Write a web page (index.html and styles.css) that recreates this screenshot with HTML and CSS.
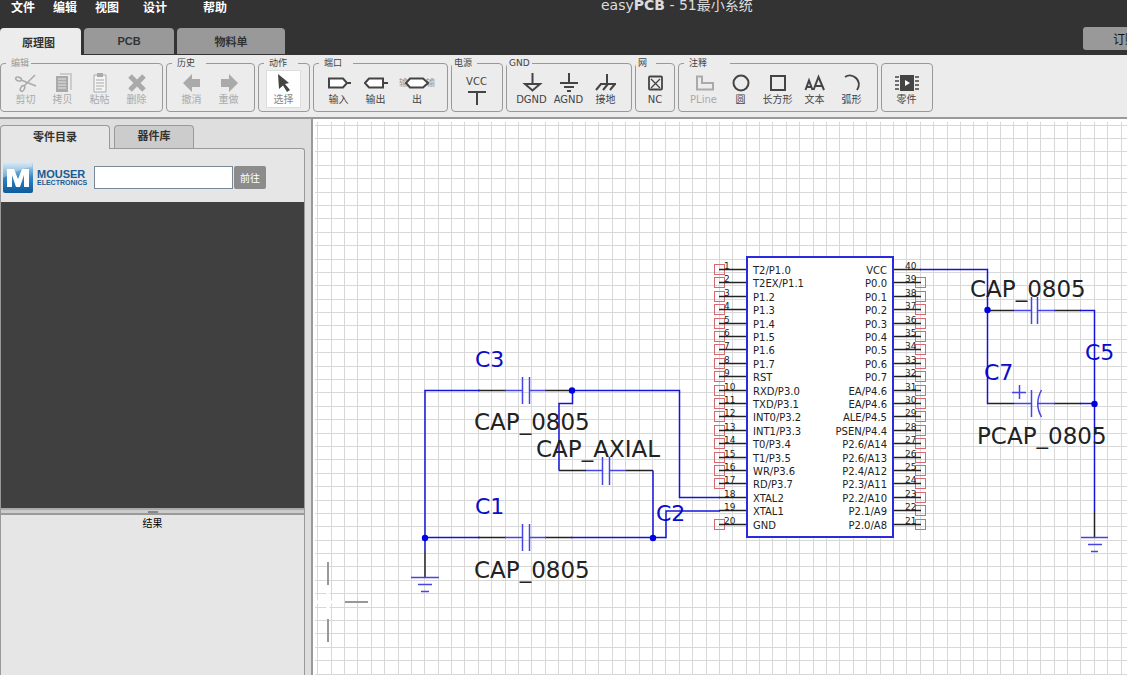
FILE: index.html
```html
<!DOCTYPE html>
<html lang="zh-CN">
<head>
<meta charset="utf-8">
<title>easyPCB - 51最小系统</title>
<link rel="stylesheet" href="styles.css">
</head>
<body>
<div class="app">
  <header class="header">
    <div class="menubar">
      <nav class="menu">
        <button>文件</button><button>编辑</button><button>视图</button><button class="menu-wide">设计</button><button class="menu-last">帮助</button>
      </nav>
      <h1 class="title">easy<b>PCB</b> - 51最小系统</h1>
    </div>
    <div class="tabbar">
      <button class="tab tab-active">原理图</button>
      <button class="tab tab-mid">PCB</button>
      <button class="tab tab-wide">物料单</button>
      <button class="order">订购</button>
    </div>
  </header>

  <div class="toolbar">
    <fieldset class="group">
      <legend class="lg-s dim">编辑</legend>
      <button class="tool" disabled><svg viewBox="0 0 24 22"><g fill="none" stroke="currentColor" stroke-width="1.5"><path d="M7 8L22 14M21 3L10 14"/><ellipse cx="4.500" cy="7" rx="3" ry="1.800" transform="rotate(20 4.500 7)"/><ellipse cx="8.500" cy="16.500" rx="1.900" ry="3" transform="rotate(30 8.500 16.500)"/></g></svg>剪切</button>
      <button class="tool" disabled><svg viewBox="0 0 24 22"><path d="M9 2H20V18" fill="none" stroke="#ccc" stroke-width="2"/><path d="M5 4H17V20H5Z" fill="currentColor"/><path d="M7 7H15M7 10H15M7 13H15M7 16H15" stroke="#e6e6e6"/></svg>拷贝</button>
      <button class="tool" disabled><svg viewBox="0 0 24 22"><path d="M6 3H18V20H6Z" fill="#f4f4f4" stroke="currentColor"/><path d="M9 1H15V5H9Z" fill="currentColor"/><path d="M8 8H16M8 11H16M8 14H16M8 17H14" stroke="currentColor"/></svg>粘帖</button>
      <button class="tool" disabled><svg viewBox="0 0 24 22"><path d="M5 4L19 18M19 4L5 18" stroke="currentColor" stroke-width="5"/></svg>删除</button>
    </fieldset>
    <fieldset class="group">
      <legend class="lg-m">历史</legend>
      <button class="tool" disabled><svg viewBox="0 0 24 22"><path d="M3 11L12 2V7H20V15H12V20Z" fill="currentColor"/></svg>撤消</button>
      <button class="tool" disabled><svg viewBox="0 0 24 22"><path d="M21 11L12 2V7H4V15H12V20Z" fill="currentColor"/></svg>重做</button>
    </fieldset>
    <fieldset class="group">
      <legend class="lg-m">动作</legend>
      <button class="tool selected"><svg viewBox="0 0 24 22"><path d="M6 2L17 11L13 12L18 18L15 20L11 13.500L7 17Z" fill="currentColor"/></svg><span>选择</span></button>
    </fieldset>
    <fieldset class="group">
      <legend class="lg-m">端口</legend>
      <button class="tool"><svg viewBox="0 0 24 22"><path d="M2 6.500H16L20 11L16 15.500H2ZM20 11H24" fill="#fff" stroke="currentColor" stroke-width="2"/></svg>输入</button>
      <button class="tool"><svg viewBox="0 0 24 22"><path d="M5 6.500H19V15.500H5L1 11ZM19 11H24" fill="#fff" stroke="currentColor" stroke-width="2"/></svg>输出</button>
      <button class="tool inout"><span class="inout-word">输</span><svg viewBox="0 0 26 22"><path d="M6 6.500H19L24 11L19 15.500H6L2 11Z" fill="#fff" stroke="currentColor" stroke-width="2"/></svg><span class="inout-word">输</span><span class="inout-label">出</span></button>
    </fieldset>
    <fieldset class="group">
      <legend class="lg-s flush">电源</legend>
      <button class="tool vcc">VCC<svg viewBox="0 0 24 22"><path d="M3 4H21M12 4V17" stroke="currentColor" stroke-width="2"/></svg></button>
    </fieldset>
    <fieldset class="group">
      <legend class="lg-s flush">GND</legend>
      <button class="tool"><svg viewBox="0 0 24 22"><path d="M12.500 1V12M5 12H20L12.500 18.500Z" fill="none" stroke="currentColor" stroke-width="2"/></svg>DGND</button>
      <button class="tool"><svg viewBox="0 0 24 22"><path d="M12 1V11M3 11H21M7 15H17M10 19H14" stroke="currentColor" stroke-width="2"/></svg>AGND</button>
      <button class="tool"><svg viewBox="0 0 24 22"><path d="M13 2V12M6 12H22M7 12L2 18M14 12L9 18M21 12L16 18" stroke="currentColor" stroke-width="2"/></svg>接地</button>
    </fieldset>
    <fieldset class="group tight">
      <legend class="lg-s flush">网</legend>
      <button class="tool"><svg viewBox="0 0 24 22"><rect x="6" y="4.500" width="13" height="13" rx="1" fill="none" stroke="currentColor" stroke-width="1.800"/><path d="M8 7L17 16M17 7L8 16" stroke="currentColor" stroke-width="1.300"/></svg>NC</button>
    </fieldset>
    <fieldset class="group">
      <legend class="lg-l">注释</legend>
      <button class="tool" disabled><svg viewBox="0 0 24 22"><path d="M5 4.500H10V11H21V17.500H5Z" fill="none" stroke="currentColor" stroke-width="2"/></svg>PLine</button>
      <button class="tool"><svg viewBox="0 0 24 22"><circle cx="12" cy="11" r="7.500" fill="none" stroke="currentColor" stroke-width="2"/></svg>圆</button>
      <button class="tool"><svg viewBox="0 0 24 22"><rect x="5" y="4" width="14" height="14" fill="none" stroke="currentColor" stroke-width="2"/></svg>长方形</button>
      <button class="tool"><svg viewBox="0 0 24 22"><path d="M2.500 18L6 8.500L9.500 18M4 15H8.500M10.500 18L15.500 5L21 18M12.500 14H19" fill="none" stroke="currentColor" stroke-width="2"/></svg>文本</button>
      <button class="tool"><svg viewBox="0 0 24 22"><path d="M5 5C13 0 23 9 17 18" fill="none" stroke="currentColor" stroke-width="2"/></svg>弧形</button>
    </fieldset>
    <fieldset class="group">
      <legend class="lg-none"></legend>
      <button class="tool"><svg class="wide-icon" viewBox="0 0 26 22"><path d="M1 5H25M1 9H25M1 13H25M1 17H25" stroke="currentColor" stroke-width="1.500"/><path d="M5.500 2.500H20.500V19.500H5.500Z" fill="currentColor" stroke="#ececec"/><path d="M11 8L16 11L11 14Z" fill="#fff"/></svg>零件</button>
    </fieldset>
  </div>

  <main class="workspace">
    <aside class="sidebar">
      <div class="side-tabs">
        <button class="side-tab side-tab-active">零件目录</button>
        <button class="side-tab">器件库</button>
      </div>
      <div class="side-body">
        <form class="search">
          <svg class="logo" viewBox="0 0 30 31" aria-hidden="true">
            <defs><linearGradient id="lg" x1="0" y1="0" x2="0" y2="1"><stop offset="0" stop-color="#cfe3f1"/><stop offset=".5" stop-color="#2f86c2"/><stop offset="1" stop-color="#0c5a9c"/></linearGradient></defs>
            <rect width="30" height="31" rx="2" fill="url(#lg)"/>
            <path d="M0 16C9 11 20 6 29 5V2Q29 0 27 0H2Q0 0 0 2Z" fill="#fff" opacity=".3"/>
            <path d="M4 25V7H11L15 17L19 7H26V25H21V13L17 25H13L9 13V25Z" fill="#fff"/>
          </svg>
          <div class="brand"><strong>MOUSER</strong><span>ELECTRONICS</span></div>
          <input class="query" type="text" aria-label="搜索零件">
          <button class="go" type="button">前往</button>
        </form>
        <div class="catalog"></div>
        <div class="splitter"><i></i></div>
        <section class="results"><h2>结果</h2></section>
      </div>
    </aside>

    <section class="canvas">
      <svg class="sheet" role="img" aria-label="51最小系统原理图">
        <g transform="translate(-313 -119)">
          <path id="grid" class="grid"/>
          <path class="clear" d="M316 602H342M328 587V617"/>
          <path class="cursor" d="M328 562V585M328 619V642M345 602H368"/>
          <rect class="chip" x="747" y="257" width="146" height="280"/>
          <g id="pins"></g>
          <g class="lead">
            <path d="M478 390.500H506M545 390.500H572M559 470.500H586M626 470.500H653M478 537.500H506M545 537.500H572M425 551V577M987 310.500H1014M1054 310.500H1081M987 403.500H1014M1054 403.500H1081M1094.500 511V538"/>
          </g>
          <g class="wire">
            <path d="M480 390.500H425V551M425 537.500H480M571 390.500H679.500V497.500H720M572.500 390V403.500H559V470.500M653 470.500V538M571 537.500H666V511H720M920 269.500H987.500V404M1080 310.500H1094.500V511M1080 403.500H1095"/>
          </g>
          <g class="symbol">
            <path d="M505 390.500H522.500M529.500 390.500H546M522.500 377V404M529.500 377V404"/>
            <path d="M586 470.500H602.500M609.500 470.500H626M602.500 457V485M609.500 457V485"/>
            <path d="M505 537.500H522.500M529.500 537.500H546M522.500 524V551M529.500 524V551"/>
            <path d="M1014 310.500H1031.500M1037.500 310.500H1055M1031.500 297V324M1037.500 297V324"/>
            <path d="M1014 403.500H1031.500M1037.500 403.500H1055M1031.500 390V417M1041.500 390Q1034 404 1041.500 417M1012 392.500H1026M1019.500 385V399"/>
            <path d="M411 577.500H439M418 584.500H432M421 591.500H429M1081 537.500H1108M1088 544.500H1102M1091 551.500H1098"/>
          </g>
          <g class="dot">
            <circle cx="572" cy="390.500" r="3.200"/><circle cx="425" cy="538" r="3.200"/><circle cx="653" cy="538" r="3.200"/><circle cx="987.500" cy="310" r="3.200"/><circle cx="1094.500" cy="404" r="3.200"/>
          </g>
          <g class="part">
            <text x="474" y="430">CAP_0805</text><text x="536" y="457">CAP_AXIAL</text><text x="474" y="578">CAP_0805</text><text x="970" y="297">CAP_0805</text><text x="977" y="444">PCAP_0805</text>
          </g>
          <g class="ref">
            <text x="475" y="367">C3</text><text x="475" y="514">C1</text><text x="656" y="521">C2</text><text x="1085" y="360">C5</text><text x="984" y="380">C7</text>
          </g>
        </g>
      </svg>
    </section>
  </main>
</div>
<script src="script.js"></script>
</body>
</html>
```
FILE: styles.css
```css
* { box-sizing: border-box; }
body { margin: 0; font-family: "DejaVu Sans", "Noto Sans CJK SC", sans-serif; overflow: hidden; }
button { font-family: inherit; border: 0; padding: 0; background: none; white-space: nowrap; }
.app { display: flex; flex-direction: column; height: 100vh; }

.header { background: #333; overflow: hidden; flex: none; }
.menubar { display: flex; height: 28px; }
.menu { display: flex; width: 601px; padding-left: 11px; flex: none; }
.menu button { color: #fff; font-size: 12px; font-weight: bold; line-height: 17px; height: 17px; margin-right: 18px; }
.menu .menu-wide { margin-left: 6px; }
.menu .menu-last { margin-left: 18px; }
.title { margin: -5px 0 0; color: #ddd; font-size: 14px; font-weight: normal; line-height: 20px; white-space: nowrap; }
.tabbar { display: flex; gap: 3px; height: 27px; }
.tab { width: 90px; background: #999; color: #333; border-radius: 4px 4px 0 0; font-family: "Liberation Sans", "Noto Sans CJK SC", sans-serif; font-size: 11px; font-weight: bold; height: 26px; }
.tab-active { width: 81px; background: #ececec; height: 27px; padding-right: 4px; }
.tab-wide { width: 108px; }
.order { flex: none; width: 84px; height: 23px; margin: -1px -40px 0 auto; background: #999; border-radius: 3px; font-size: 12px; color: #111; }

.toolbar { display: flex; gap: 3px; height: 64px; flex: none; padding-top: 2px; background: #ececec; border-bottom: 2px solid #999; overflow: hidden; }
.group { display: flex; flex: none; margin: 0; padding: 0 7px 0 6px; border: 1px solid #999; border-radius: 4px; height: 55px; min-width: 0; }
.tight { padding: 0; }
.group legend { height: 13px; margin-left: -1px; padding: 0 0 0 5px; font-size: 9px; line-height: 13px; color: #444; white-space: nowrap; }
.group .dim { color: #999; }
.group .lg-s { width: 25px; }
.group .lg-m { width: 34px; }
.group .lg-l { width: 46px; }
.group .lg-none { width: 0; padding: 0; }
.group .flush { margin-left: -6px; padding-left: 2px; }
.tight .flush { margin-left: 0; width: 20px; }
.tool { display: flex; flex-direction: column; align-items: center; width: 37px; height: 40px; color: #444; font-size: 10px; line-height: 12px; padding-top: 2px; }
.tool:disabled { color: #aaa; }
.tool svg { width: 24px; height: 22px; flex: none; display: block; }
.tool .wide-icon { width: 26px; }
.selected { width: 35px; margin: 0 1px; height: 38px; background: #fff; border: 1px solid #ddd; padding-top: 1px; }
.selected span { color: #888; }
.inout { width: 46px; flex-flow: row wrap; justify-content: center; align-content: flex-start; }
.inout-word { color: #999; font-size: 9px; line-height: 22px; }
.tool.inout svg { position: relative; width: 26px; margin: 0 -4px; }
.inout-label { width: 100%; text-align: center; }
.vcc { padding-top: 6px; }
.tight .tool { width: 38px; }

.workspace { display: flex; flex: 1; min-height: 0; }
.sidebar { display: flex; flex-direction: column; flex: none; width: 313px; padding: 6px 6px 0 0; background: #dedede; border-right: 2px solid #999; }
.side-tabs { display: flex; gap: 4px; height: 23px; }
.side-tab { width: 80px; height: 23px; background: #ccc; color: #333; border: 1px solid #999; border-bottom: 0; border-radius: 4px 4px 0 0; font-size: 11px; font-weight: bold; line-height: 20px; }
.side-tab-active { width: 110px; height: 24px; background: #e6e6e6; z-index: 1; }
.side-body { display: flex; flex-direction: column; flex: 1; min-height: 0; background: #e6e6e6; border: 1px solid #999; border-bottom: 0; border-radius: 0 3px 0 0; }
.search { display: flex; align-items: center; height: 53px; flex: none; margin: 0; padding: 4px 0 0 2px; }
.logo { width: 30px; height: 31px; margin-right: 4px; flex: none; }
.brand { width: 57px; display: flex; flex-direction: column; color: #175c94; font-family: "Liberation Sans", sans-serif; }
.brand strong { font-size: 11px; line-height: 10px; }
.brand span { font-size: 7px; line-height: 7px; font-weight: bold; }
.query { width: 139px; height: 23px; border: 1px solid #789; background: #fff; }
.go { width: 32px; height: 23px; margin-left: 1px; border-radius: 2px; background: #8c8c8c; color: #fff; font-size: 10px; }
.catalog { flex: 306 1 0; background: #404040; }
.splitter { flex: none; height: 7px; border-top: 2px solid #aaa; border-bottom: 2px solid #999; background: #ccc; display: flex; justify-content: center; align-items: flex-end; }
.splitter i { width: 10px; height: 2px; background: #888; }
.results { flex: 160 1 0; }
.results h2 { margin: 0; font-size: 10px; line-height: 18px; font-weight: normal; color: #000; text-align: center; }

.canvas { flex: 1; min-width: 0; background: #fff; overflow: hidden; }
.sheet { display: block; width: 100%; height: 100%; }
.grid { stroke: #d8d8d8; fill: none; shape-rendering: crispEdges; }
.clear { stroke: #fff; stroke-width: 3; }
.cursor { stroke: #999; stroke-width: 2; }
.chip { fill: #fff; stroke: #2a2ae0; stroke-width: 2; }
.lead, .pin-lead { stroke: #222; stroke-width: 1.5; }
.wire { stroke: #1414d8; stroke-width: 1.5; fill: none; }
.symbol { stroke: #4444e8; stroke-width: 1.5; fill: none; }
.dot { fill: #0000e0; }
.part { font-family: "DejaVu Sans", sans-serif; font-size: 23px; fill: #222; }
.ref { font-family: "DejaVu Sans", sans-serif; font-size: 22px; fill: #0a0ac8; }
.pin-number { font-family: "DejaVu Sans", sans-serif; font-size: 9px; fill: #222; }
.pin-text { font-family: "DejaVu Sans", sans-serif; font-size: 10px; fill: #222; }
.pin-end { text-anchor: end; }
.pin-open { fill: none; stroke: #d66a72; }
```
FILE: script.js
```js
const NS = "http://www.w3.org/2000/svg";
const PITCH = 13.39;
const pins = document.getElementById("pins");

function add(name, attrs, text) {
  const el = document.createElementNS(NS, name);
  for (const key in attrs) el.setAttribute(key, attrs[key]);
  if (text) el.textContent = text;
  pins.appendChild(el);
}

// Grid lines snapped to whole pixels
let d = "";
for (let i = 0; i < 150; i++) d += `M${Math.floor(317.7 + i * PITCH) + 0.5} 122V2000`;
for (let i = 0; i < 100; i++) d += `M315 ${Math.floor(125.1 + i * PITCH) + 0.5}H2300`;
document.getElementById("grid").setAttribute("d", d);

const left = ["T2/P1.0", "T2EX/P1.1", "P1.2", "P1.3", "P1.4", "P1.5", "P1.6", "P1.7", "RST", "RXD/P3.0",
  "TXD/P3.1", "INT0/P3.2", "INT1/P3.3", "T0/P3.4", "T1/P3.5", "WR/P3.6", "RD/P3.7", "XTAL2", "XTAL1", "GND"];
const right = ["VCC", "P0.0", "P0.1", "P0.2", "P0.3", "P0.4", "P0.5", "P0.6", "P0.7", "EA/P4.6",
  "EA/P4.6", "ALE/P4.5", "PSEN/P4.4", "P2.6/A14", "P2.6/A13", "P2.4/A12", "P2.3/A11", "P2.2/A10", "P2.1/A9", "P2.0/A8"];
const wired = [18, 19, 40];

function pin(number, label, i, isRight) {
  const y = Math.floor(269.6 + i * PITCH) + 0.5;
  if (!wired.includes(number)) {
    add("rect", { class: "pin-open", x: isRight ? 915.5 : 714.5, y: y - 5, width: 10, height: 10 });
  }
  add("path", { class: "pin-lead", d: isRight ? `M894 ${y}H921` : `M719 ${y}H746` });
  add("text", { class: "pin-number", x: isRight ? 905 : 724, y: y - 0.5 }, String(number));
  add("text", { class: isRight ? "pin-text pin-end" : "pin-text", x: isRight ? 887 : 753, y: y + 4.5 }, label);
}
left.forEach((label, i) => pin(i + 1, label, i, false));
right.forEach((label, i) => pin(40 - i, label, i, true));
```
